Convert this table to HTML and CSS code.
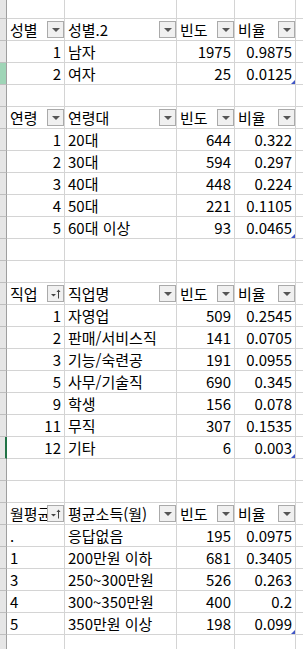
FILE: index.html
```html
<!DOCTYPE html>
<html lang="ko">
<head>
<meta charset="utf-8">
<link rel="stylesheet" href="styles.css">
</head>
<body>
<div class="sheet">
  <div class="row first"><div class="rh"></div><div class="c"></div><div class="c"></div><div class="c"></div><div class="c"></div><div class="c e"></div></div>

  <div class="row"><div class="rh"></div><div class="c h"><span class="t">성별</span><span class="fb"></span></div><div class="c h"><span class="t">성별.2</span><span class="fb"></span></div><div class="c h"><span class="t">빈도</span><span class="fb"></span></div><div class="c h"><span class="t">비율</span><span class="fb"></span></div><div class="c e"></div></div>
  <div class="row"><div class="rh"></div><div class="c n">1</div><div class="c">남자</div><div class="c n">1975</div><div class="c n">0.9875</div><div class="c e"></div></div>
  <div class="row"><div class="rh sel"></div><div class="c n">2</div><div class="c">여자</div><div class="c n">25</div><div class="c n end">0.0125</div><div class="c e"></div></div>
  <div class="row"><div class="rh"></div><div class="c"></div><div class="c"></div><div class="c"></div><div class="c"></div><div class="c e"></div></div>

  <div class="row"><div class="rh"></div><div class="c h"><span class="t">연령</span><span class="fb"></span></div><div class="c h"><span class="t">연령대</span><span class="fb"></span></div><div class="c h"><span class="t">빈도</span><span class="fb"></span></div><div class="c h"><span class="t">비율</span><span class="fb"></span></div><div class="c e"></div></div>
  <div class="row"><div class="rh"></div><div class="c n">1</div><div class="c">20대</div><div class="c n">644</div><div class="c n">0.322</div><div class="c e"></div></div>
  <div class="row"><div class="rh"></div><div class="c n">2</div><div class="c">30대</div><div class="c n">594</div><div class="c n">0.297</div><div class="c e"></div></div>
  <div class="row"><div class="rh"></div><div class="c n">3</div><div class="c">40대</div><div class="c n">448</div><div class="c n">0.224</div><div class="c e"></div></div>
  <div class="row"><div class="rh"></div><div class="c n">4</div><div class="c">50대</div><div class="c n">221</div><div class="c n">0.1105</div><div class="c e"></div></div>
  <div class="row"><div class="rh"></div><div class="c n">5</div><div class="c">60대 이상</div><div class="c n">93</div><div class="c n end">0.0465</div><div class="c e"></div></div>
  <div class="row"><div class="rh"></div><div class="c"></div><div class="c"></div><div class="c"></div><div class="c"></div><div class="c e"></div></div>
  <div class="row"><div class="rh"></div><div class="c"></div><div class="c"></div><div class="c"></div><div class="c"></div><div class="c e"></div></div>

  <div class="row"><div class="rh"></div><div class="c h"><span class="t">직업</span><span class="fb sort"><svg viewBox="0 0 15 15" width="15" height="15"><path d="M3 8h5l-2.5 2.5z" fill="#444"/><path d="M10.5 12.5V4" stroke="#444" stroke-width="1" fill="none"/><path d="M8.5 6l2-2.5 2 2.5z" fill="#444"/></svg></span></div><div class="c h"><span class="t">직업명</span><span class="fb"></span></div><div class="c h"><span class="t">빈도</span><span class="fb"></span></div><div class="c h"><span class="t">비율</span><span class="fb"></span></div><div class="c e"></div></div>
  <div class="row"><div class="rh"></div><div class="c n">1</div><div class="c">자영업</div><div class="c n">509</div><div class="c n">0.2545</div><div class="c e"></div></div>
  <div class="row"><div class="rh"></div><div class="c n">2</div><div class="c">판매/서비스직</div><div class="c n">141</div><div class="c n">0.0705</div><div class="c e"></div></div>
  <div class="row"><div class="rh"></div><div class="c n">3</div><div class="c">기능/숙련공</div><div class="c n">191</div><div class="c n">0.0955</div><div class="c e"></div></div>
  <div class="row"><div class="rh"></div><div class="c n">5</div><div class="c">사무/기술직</div><div class="c n">690</div><div class="c n">0.345</div><div class="c e"></div></div>
  <div class="row"><div class="rh"></div><div class="c n">9</div><div class="c">학생</div><div class="c n">156</div><div class="c n">0.078</div><div class="c e"></div></div>
  <div class="row"><div class="rh"></div><div class="c n">11</div><div class="c">무직</div><div class="c n">307</div><div class="c n">0.1535</div><div class="c e"></div></div>
  <div class="row"><div class="rh act"></div><div class="c n">12</div><div class="c">기타</div><div class="c n">6</div><div class="c n end">0.003</div><div class="c e"></div></div>
  <div class="row"><div class="rh"></div><div class="c"></div><div class="c"></div><div class="c"></div><div class="c"></div><div class="c e"></div></div>
  <div class="row"><div class="rh"></div><div class="c"></div><div class="c"></div><div class="c"></div><div class="c"></div><div class="c e"></div></div>

  <div class="row"><div class="rh"></div><div class="c h"><span class="t wide">월평균</span><span class="fb sort"><svg viewBox="0 0 15 15" width="15" height="15"><path d="M3 8h5l-2.5 2.5z" fill="#444"/><path d="M10.5 12.5V4" stroke="#444" stroke-width="1" fill="none"/><path d="M8.5 6l2-2.5 2 2.5z" fill="#444"/></svg></span></div><div class="c h"><span class="t">평균소득(월)</span><span class="fb"></span></div><div class="c h"><span class="t">빈도</span><span class="fb"></span></div><div class="c h"><span class="t">비율</span><span class="fb"></span></div><div class="c e"></div></div>
  <div class="row"><div class="rh"></div><div class="c">.</div><div class="c">응답없음</div><div class="c n">195</div><div class="c n">0.0975</div><div class="c e"></div></div>
  <div class="row"><div class="rh"></div><div class="c">1</div><div class="c">200만원 이하</div><div class="c n">681</div><div class="c n">0.3405</div><div class="c e"></div></div>
  <div class="row"><div class="rh"></div><div class="c">3</div><div class="c">250~300만원</div><div class="c n">526</div><div class="c n">0.263</div><div class="c e"></div></div>
  <div class="row"><div class="rh"></div><div class="c">4</div><div class="c">300~350만원</div><div class="c n">400</div><div class="c n">0.2</div><div class="c e"></div></div>
  <div class="row"><div class="rh"></div><div class="c">5</div><div class="c">350만원 이상</div><div class="c n">198</div><div class="c n end">0.099</div><div class="c e"></div></div>
  <div class="row"><div class="rh"></div><div class="c"></div><div class="c"></div><div class="c"></div><div class="c"></div><div class="c e"></div></div>
</div>
</body>
</html>
```

FILE: styles.css
```css
html, body {
  margin: 0;
  padding: 0;
  background: #ffffff;
  overflow: hidden;
}

.sheet {
  width: 303px;
  height: 649px;
  overflow: hidden;
  font-family: "Noto Sans CJK KR", "Malgun Gothic", sans-serif;
  font-size: 15px;
  color: #000000;
}

.row {
  display: grid;
  grid-template-columns: 7px 58px 112px 58px 61px 1fr;
  height: 22px;
}

.row.first {
  height: 19px;
}

.rh {
  background: #e6e6e6;
  border-right: 1px solid #9f9f9f;
  border-bottom: 1px solid #bfbfbf;
}

.rh.sel {
  background: #9fd5b7;
}

.rh.act {
  border-right: 2px solid #217346;
  width: 5px;
}

.c {
  position: relative;
  border-right: 1px solid #d4d4d4;
  border-bottom: 1px solid #d4d4d4;
  padding: 0 3px;
  line-height: 21px;
  white-space: nowrap;
  overflow: hidden;
}

.c.e {
  border-right: none;
}

.c.n {
  text-align: right;
}

.c.h {
  display: flex;
}

.t {
  display: block;
  white-space: nowrap;
  flex: 0 0 auto;
}

.fb {
  position: absolute;
  right: 0;
  top: 2px;
  width: 15px;
  height: 15px;
  background: #f0f0f0;
  border: 1px solid #aaaaaa;
}

.fb svg {
  display: block;
}

.fb:not(.sort)::after {
  content: "";
  position: absolute;
  left: 4px;
  top: 6px;
  border-left: 4px solid transparent;
  border-right: 4px solid transparent;
  border-top: 4px solid #555555;
}

.end::after {
  content: "";
  position: absolute;
  right: 0;
  bottom: 0;
  border-left: 4px solid transparent;
  border-bottom: 4px solid #3f54c6;
}
```
